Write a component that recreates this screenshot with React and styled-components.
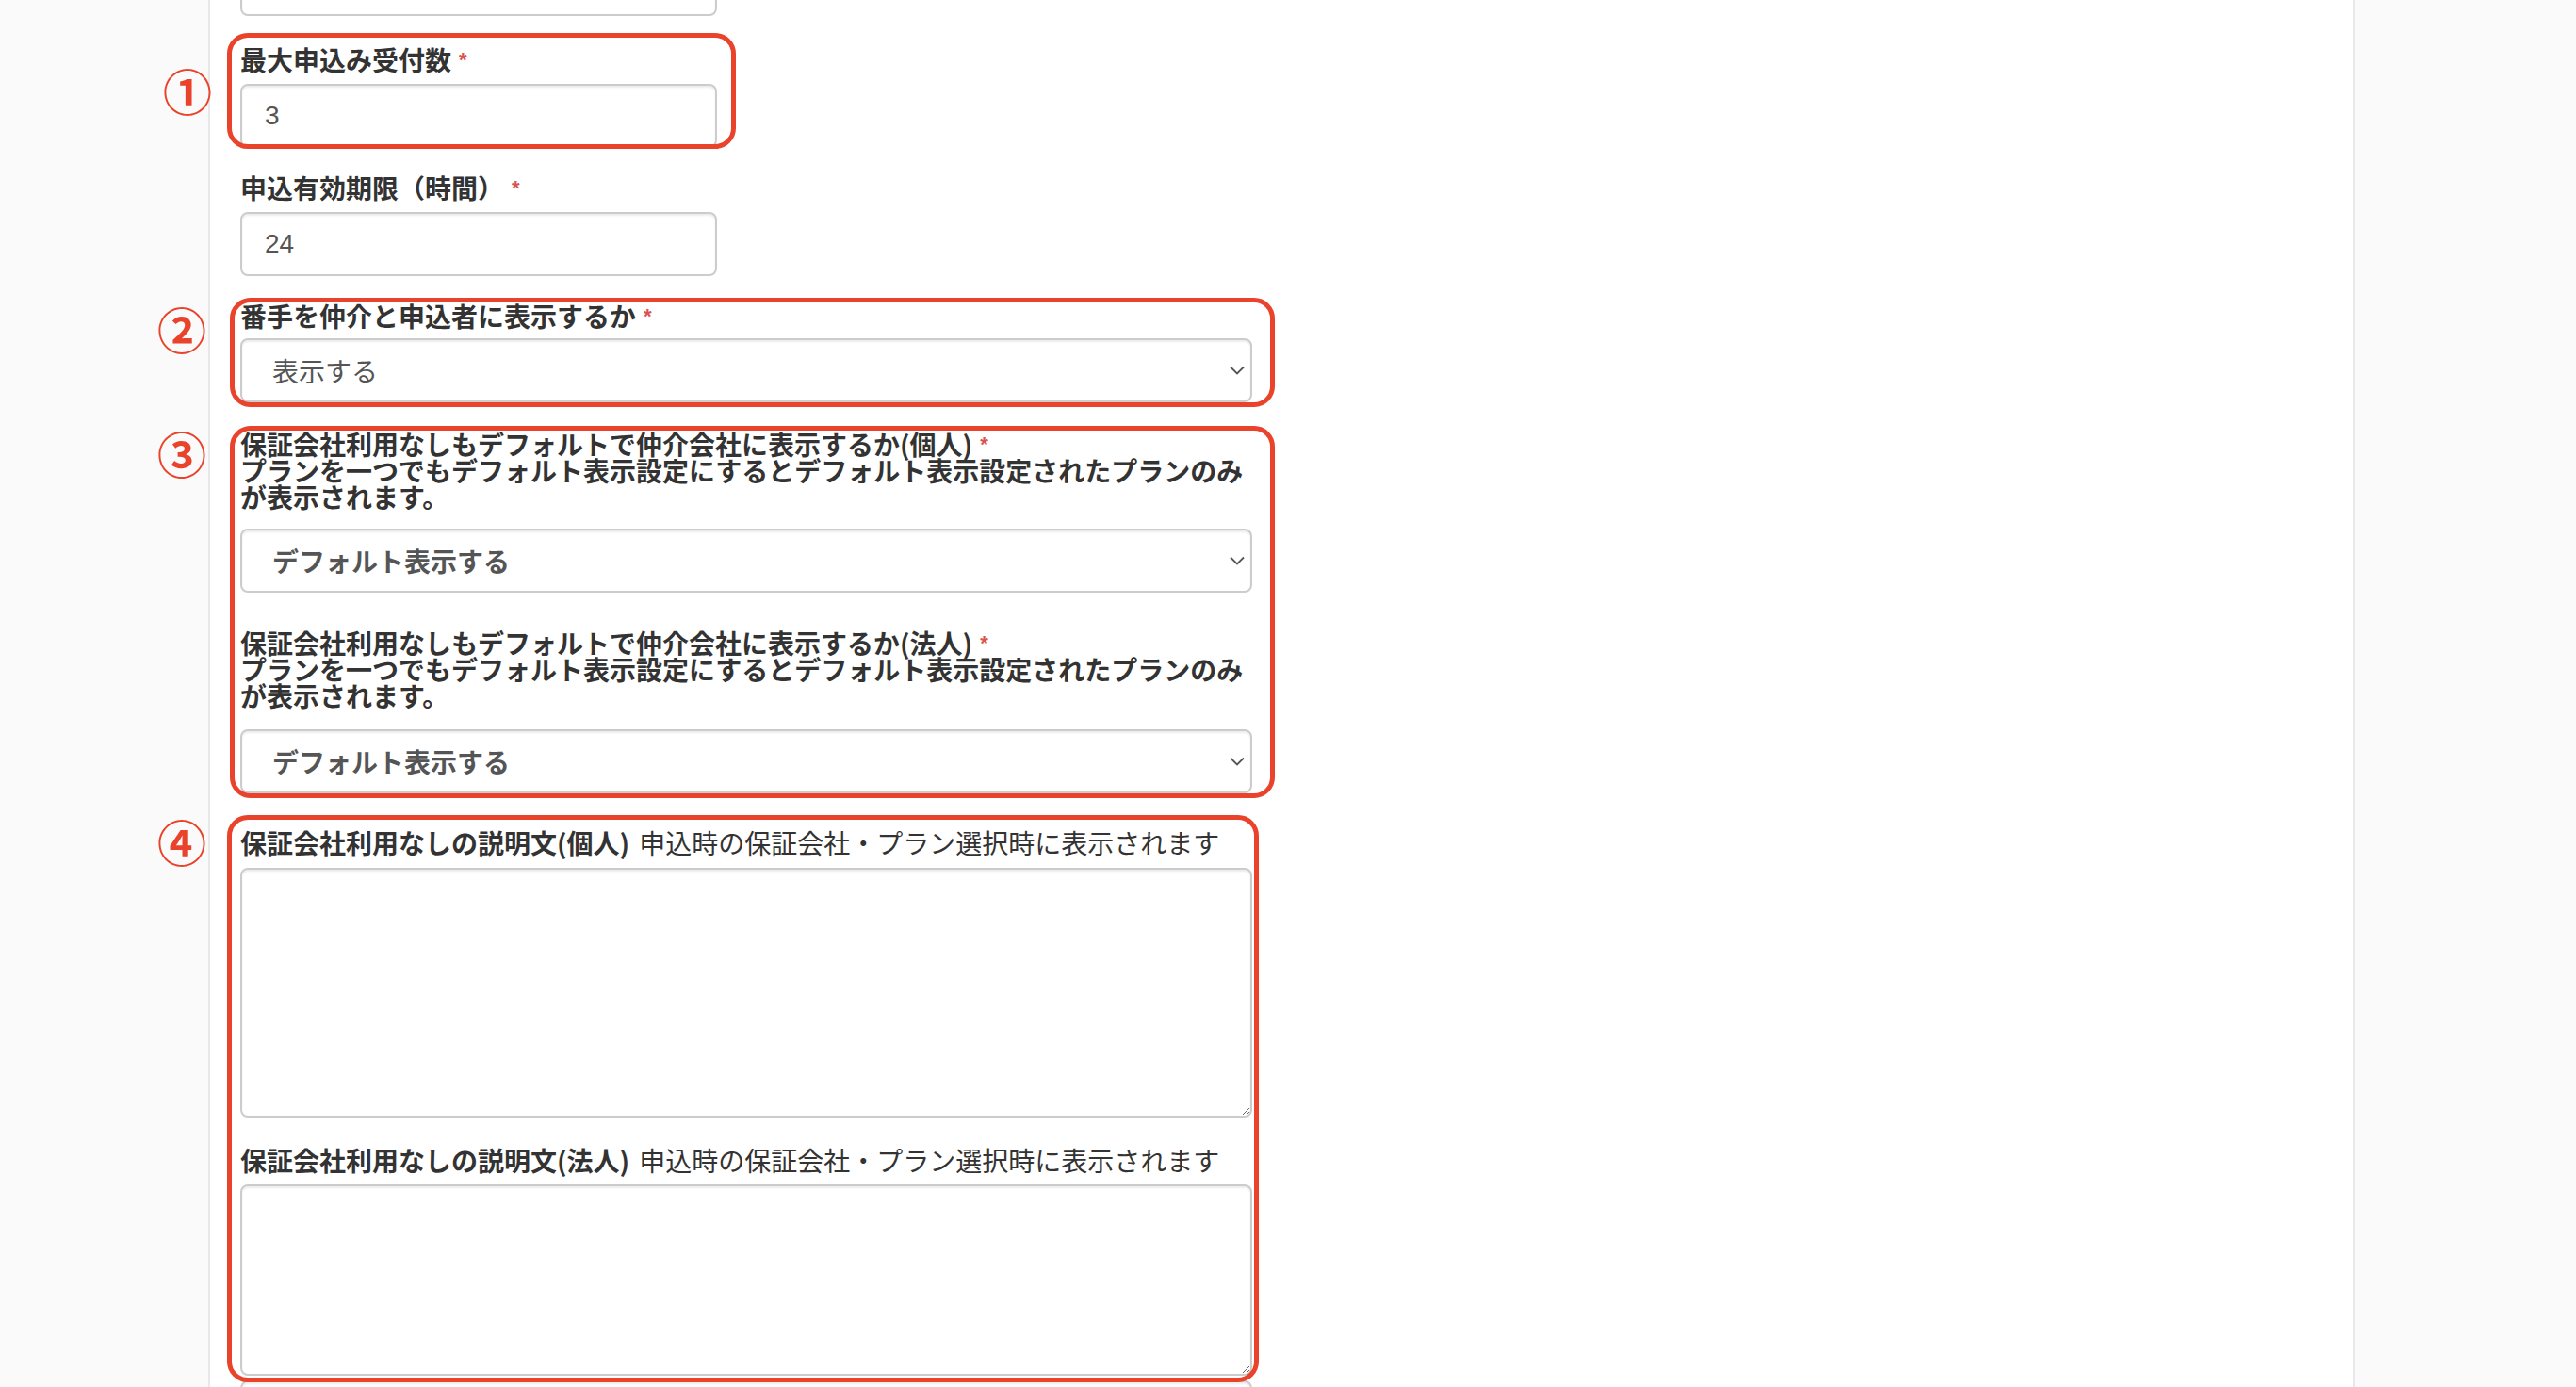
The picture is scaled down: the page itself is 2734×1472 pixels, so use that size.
import React from "react";
import styled, { createGlobalStyle } from "styled-components";

const GlobalStyle = createGlobalStyle`
  html, body {
    margin: 0;
    padding: 0;
    background: #fafafa;
  }
  body {
    font-family: "Liberation Sans", "Noto Sans CJK JP", sans-serif;
    color: #333;
  }
`;

const Page = styled.div`
  display: grid;
  grid-template-columns: 221px 2278px 1fr;
  height: 1472px;
  overflow: hidden;
  background: #fafafa;
`;

const Gutter = styled.div`
  background: #fafafa;
`;

const Panel = styled.main`
  background: #ffffff;
  border-left: 2px solid #e7e7ec;
  border-right: 2px solid #e7e7ec;
  padding: 0 32px;
  overflow: visible;
`;

const FormColumn = styled.div`
  width: 1074px;
  margin-top: -51px;
  display: flex;
  flex-direction: column;
`;

const FieldGroup = styled.div`
  margin-bottom: ${(p) => p.$mb ?? 0}px;
`;

const Annotated = styled.section`
  position: relative;
  margin-bottom: ${(p) => p.$mb ?? 0}px;

  &::after {
    content: "";
    position: absolute;
    top: ${(p) => p.$t}px;
    right: ${(p) => p.$r}px;
    bottom: ${(p) => p.$b}px;
    left: ${(p) => p.$l}px;
    border: 5px solid #e9442b;
    border-radius: 22px;
    pointer-events: none;
  }
`;

const Marker = styled.span`
  position: absolute;
  left: ${(p) => p.$x}px;
  top: ${(p) => p.$y}px;
  transform: translate(-50%, -50%);
  font-family: "Noto Sans CJK JP", sans-serif;
  font-weight: 700;
  font-size: 52px;
  line-height: 1;
  color: #e9442b;
  white-space: nowrap;
`;

const Label = styled.label`
  display: block;
  font-family: "Noto Sans CJK JP", sans-serif;
  font-weight: 700;
  font-size: 28px;
  line-height: 28px;
  color: #333;
  margin-bottom: ${(p) => p.$mb ?? 12}px;
`;

const Note = styled.span`
  font-weight: 400;
  margin-left: 10px;
`;

const Req = styled.span`
  font-family: "Liberation Sans", sans-serif;
  color: #d9534f;
  font-size: 22px;
  line-height: 0;
  margin-left: 8px;
  vertical-align: 4px;
`;

const TextInput = styled.input`
  display: block;
  box-sizing: border-box;
  width: ${(p) => p.$w ?? 506}px;
  height: 68px;
  padding: 0 24px;
  border: 2px solid #cccccc;
  border-radius: 8px;
  box-shadow: inset 0 2px 2px rgba(0, 0, 0, 0.075);
  background: #fff;
  font-family: "Liberation Sans", "Noto Sans CJK JP", sans-serif;
  font-size: 28px;
  color: #555;
  outline: none;
`;

const SelectWrap = styled.div`
  position: relative;
  width: 1074px;
`;

const Select = styled.select`
  display: block;
  box-sizing: border-box;
  width: 100%;
  height: 68px;
  padding: 0 60px 0 32px;
  border: 2px solid #cccccc;
  border-radius: 8px;
  box-shadow: inset 0 2px 2px rgba(0, 0, 0, 0.075);
  background: #fff;
  appearance: none;
  -webkit-appearance: none;
  font-family: "Noto Sans CJK JP", sans-serif;
  font-size: 28px;
  font-weight: ${(p) => (p.$bold ? 700 : 400)};
  color: #555;
  outline: none;
`;

const Chevron = styled.svg`
  position: absolute;
  right: 8px;
  top: 50%;
  width: 16px;
  height: 10px;
  transform: translateY(-50%);
  pointer-events: none;
`;

const TextArea = styled.textarea`
  display: block;
  box-sizing: border-box;
  width: 1074px;
  height: ${(p) => p.$h}px;
  padding: 12px 24px;
  border: 2px solid #cccccc;
  border-radius: 8px;
  box-shadow: inset 0 2px 2px rgba(0, 0, 0, 0.075);
  background: #fff;
  font-family: "Liberation Sans", "Noto Sans CJK JP", sans-serif;
  font-size: 28px;
  color: #555;
  outline: none;
`;

function SelectBox({ value, bold }) {
  return (
    <SelectWrap>
      <Select defaultValue={value} $bold={bold}>
        <option value={value}>{value}</option>
        <option value="表示しない">表示しない</option>
      </Select>
      <Chevron viewBox="0 0 16 10">
        <path d="M1 1.5 L8 8.5 L15 1.5" fill="none" stroke="#555" strokeWidth="1.8" />
      </Chevron>
    </SelectWrap>
  );
}

export default function App() {
  return (
    <>
      <GlobalStyle />
      <Page>
        <Gutter />
        <Panel>
          <FormColumn>
            <FieldGroup $mb={32}>
              <TextInput readOnly defaultValue="" />
            </FieldGroup>

            <Annotated $mb={28} $t={-14} $r={548} $b={-1} $l={-14}>
              <Marker $x={-56} $y={47}>①</Marker>
              <FieldGroup>
                <Label>
                  最大申込み受付数<Req>*</Req>
                </Label>
                <TextInput readOnly defaultValue="3" />
              </FieldGroup>
            </Annotated>

            <FieldGroup $mb={28}>
              <Label>
                申込有効期限（時間）<Req>*</Req>
              </Label>
              <TextInput readOnly defaultValue="24" />
            </FieldGroup>

            <Annotated $mb={30} $t={-5} $r={-24} $b={-5} $l={-11}>
              <Marker $x={-62} $y={28}>②</Marker>
              <FieldGroup>
                <Label $mb={10}>
                  番手を仲介と申込者に表示するか<Req>*</Req>
                </Label>
                <SelectBox value="表示する" />
              </FieldGroup>
            </Annotated>

            <Annotated $mb={38} $t={-5} $r={-24} $b={-5} $l={-11}>
              <Marker $x={-62} $y={24}>③</Marker>
              <FieldGroup $mb={39}>
                <Label $mb={20}>
                  保証会社利用なしもデフォルトで仲介会社に表示するか(個人)<Req>*</Req>
                  <br />
                  プランを一つでもデフォルト表示設定にするとデフォルト表示設定されたプランのみが表示されます。
                </Label>
                <SelectBox value="デフォルト表示する" bold />
              </FieldGroup>
              <FieldGroup>
                <Label $mb={22}>
                  保証会社利用なしもデフォルトで仲介会社に表示するか(法人)<Req>*</Req>
                  <br />
                  プランを一つでもデフォルト表示設定にするとデフォルト表示設定されたプランのみが表示されます。
                </Label>
                <SelectBox value="デフォルト表示する" bold />
              </FieldGroup>
            </Annotated>

            <Annotated $mb={5} $t={-15} $r={-7} $b={-7} $l={-14}>
              <Marker $x={-62} $y={13}>④</Marker>
              <FieldGroup $mb={31}>
                <Label $mb={13}>
                  保証会社利用なしの説明文(個人)
                  <Note>申込時の保証会社・プラン選択時に表示されます</Note>
                </Label>
                <TextArea $h={265} />
              </FieldGroup>
              <FieldGroup>
                <Label $mb={12}>
                  保証会社利用なしの説明文(法人)
                  <Note>申込時の保証会社・プラン選択時に表示されます</Note>
                </Label>
                <TextArea $h={203} />
              </FieldGroup>
            </Annotated>

            <FieldGroup>
              <TextInput readOnly defaultValue="" $w={1074} />
            </FieldGroup>
          </FormColumn>
        </Panel>
        <Gutter />
      </Page>
    </>
  );
}
